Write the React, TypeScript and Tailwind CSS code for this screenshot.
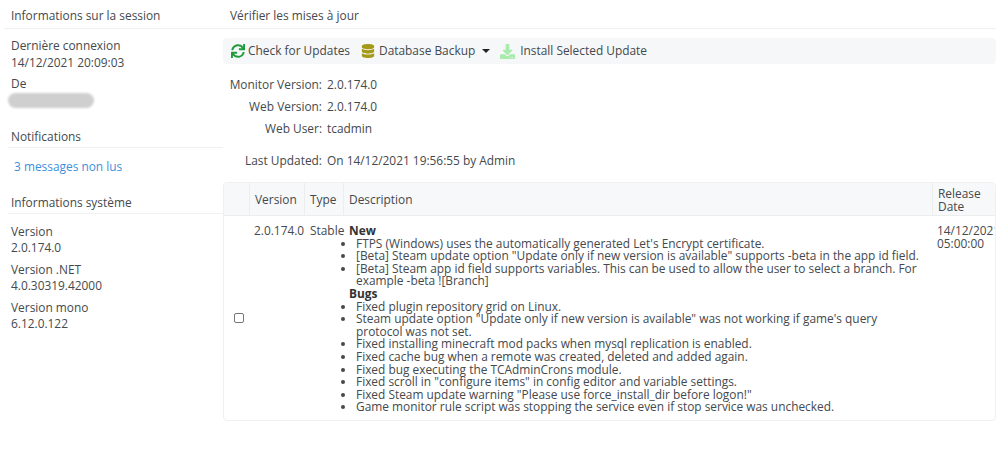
import { FaSync, FaDatabase, FaDownload } from "react-icons/fa";

const font = { fontFamily: '"Open Sans", "Noto Sans", sans-serif' };

function SideHeading({ children, className = "" }: { children: string; className?: string }) {
  return (
    <div className={`border-b border-[#f0f1f2] pl-[3px] text-[11.9px] leading-[16px] ${className}`}>{children}</div>
  );
}

function Pair({ a, b }: { a: string; b: string }) {
  return (
    <div className="mb-[5px] pl-[3px] text-[11.9px] leading-[16.5px]">
      <div>{a}</div>
      <div>{b}</div>
    </div>
  );
}

function Meta({ k, v, className = "" }: { k: string; v: string; className?: string }) {
  return (
    <div className={`flex h-[22px] items-center ${className}`}>
      <div className="w-[99px] text-right">{k}</div>
      <div className="pl-[5px]">{v}</div>
    </div>
  );
}

const news = [
  "FTPS (Windows) uses the automatically generated Let's Encrypt certificate.",
  '[Beta] Steam update option "Update only if new version is available" supports -beta in the app id field.',
  "[Beta] Steam app id field supports variables. This can be used to allow the user to select a branch. For example -beta ![Branch]",
];
const bugs = [
  "Fixed plugin repository grid on Linux.",
  'Steam update option "Update only if new version is available" was not working if game\'s query protocol was not set.',
  "Fixed installing minecraft mod packs when mysql replication is enabled.",
  "Fixed cache bug when a remote was created, deleted and added again.",
  "Fixed bug executing the TCAdminCrons module.",
  'Fixed scroll in "configure items" in config editor and variable settings.',
  'Fixed Steam update warning "Please use force_install_dir before logon!"',
  "Game monitor rule script was stopping the service even if stop service was unchecked.",
];

const cols = "grid grid-cols-[26px_55px_39px_589px_64px]";

export default function App() {
  return (
    <div style={font} className="flex h-[476px] w-[1000px] overflow-hidden bg-white text-[11.9px] text-[#44494d]">
      <aside className="w-[223px] shrink-0 pl-[8px] pt-[7px]">
        <SideHeading className="-ml-[4px] pb-[5px] pl-[7px]">Informations sur la session</SideHeading>
        <div className="pt-[8px]">
          <Pair a="Dernière connexion" b="14/12/2021 20:09:03" />
          <div className="pl-[3px] leading-[17px]">De</div>
          <div className="mt-[1px] h-[15px] w-[86px] rounded-full bg-[#cfcfcf] blur-[1px]" />
        </div>
        <SideHeading className="mt-[20px] pb-[3px]">Notifications</SideHeading>
        <div className="pl-[6px] pt-[10px] text-[#3d8fdc]">3 messages non lus</div>
        <SideHeading className="mt-[18px] pb-[3px]">Informations système</SideHeading>
        <div className="pt-[9px]">
          <Pair a="Version" b="2.0.174.0" />
          <Pair a="Version .NET" b="4.0.30319.42000" />
          <Pair a="Version mono" b="6.12.0.122" />
        </div>
      </aside>

      <main className="w-[773px] shrink-0 pt-[7px]">
        <div className="border-b border-[#f0f1f2] pb-[5px] pl-[7px] leading-[16px]">Vérifier les mises à jour</div>
        <div className="mt-[9px] flex h-[26px] items-center rounded-[4px] bg-[#f6f7f8] pl-[8px] leading-none">
          <FaSync className="text-[14px] text-[#1f9d3c]" />
          <span className="ml-[3px]">Check for Updates</span>
          <FaDatabase className="ml-[11px] text-[14px] text-[#a49a17]" />
          <span className="ml-[4px]">Database Backup</span>
          <span className="ml-[7px] h-0 w-0 border-x-[4px] border-t-[4px] border-x-transparent border-t-[#222]" />
          <FaDownload className="ml-[10px] text-[15px] text-[#a8ebaa]" />
          <span className="ml-[5px]">Install Selected Update</span>
        </div>

        <div className="mt-[10px]">
          <Meta k="Monitor Version:" v="2.0.174.0" />
          <Meta k="Web Version:" v="2.0.174.0" />
          <Meta k="Web User:" v="tcadmin" />
          <Meta k="Last Updated:" v="On 14/12/2021 19:56:55 by Admin" className="mt-[10px]" />
        </div>

        <div className="mt-[10px] overflow-hidden rounded-[4px] border border-[#eff0f1]">
          <div className={`${cols} h-[33px] items-stretch border-b border-[#eceded] bg-[#f7f8f9]`}>
            <div className="border-r border-[#eceded]" />
            <div className="flex items-center border-r border-[#eceded] pl-[5px] pt-[2px]">Version</div>
            <div className="flex items-center border-r border-[#eceded] pl-[5px] pt-[2px]">Type</div>
            <div className="flex items-center border-r border-[#eceded] pl-[5px] pt-[2px]">Description</div>
            <div className="flex items-center pl-[5px] pt-[1px] leading-[12.6px]">Release<br />Date</div>
          </div>
          <div className={`${cols} leading-[12.6px]`}>
            <div className="flex items-center justify-center pl-[3px]">
              <span className="h-[10px] w-[10px] rounded-[2px] border border-[#777]" />
            </div>
            <div className="whitespace-nowrap pl-[4px] pt-[8px]">2.0.174.0</div>
            <div className="pl-[5px] pt-[8px]">Stable</div>
            <div className="pb-[7px] pl-[5px] pr-[7px] pt-[8px]">
              <div className="font-bold text-[#333]">New</div>
              <ul className="list-disc pl-[2px] [&>li]:ml-[5px]">
                {news.map((t) => <li key={t}>{t}</li>)}
              </ul>
              <div className="font-bold text-[#333]">Bugs</div>
              <ul className="list-disc pl-[2px] [&>li]:ml-[5px]">
                {bugs.map((t) => <li key={t}>{t}</li>)}
              </ul>
            </div>
            <div className="overflow-hidden whitespace-nowrap pl-[4px] pt-[8px]">
              14/12/2021<br />05:00:00
            </div>
          </div>
        </div>
      </main>
    </div>
  );
}
